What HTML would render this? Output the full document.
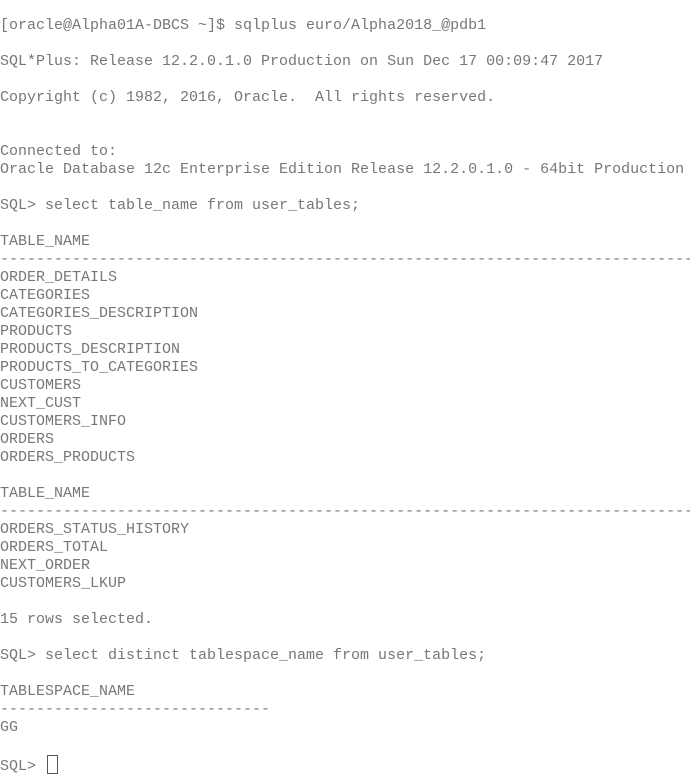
<!DOCTYPE html>
<html><head><style>
html,body{margin:0;padding:0;background:#fff;width:690px;height:770px;overflow:hidden}
pre{margin:0;position:absolute;left:0;top:17px;font-family:"Liberation Mono",monospace;font-size:15px;line-height:18px;color:#777;-webkit-text-stroke:0}
.c{display:inline-block;width:9px;height:17px;border:1px solid #555;vertical-align:-4px;margin-left:2px}
</style></head><body><pre>[oracle@Alpha01A-DBCS ~]$ sqlplus euro/Alpha2018_@pdb1

SQL*Plus: Release 12.2.0.1.0 Production on Sun Dec 17 00:09:47 2017

Copyright (c) 1982, 2016, Oracle.  All rights reserved.


Connected to:
Oracle Database 12c Enterprise Edition Release 12.2.0.1.0 - 64bit Production

SQL&gt; select table_name from user_tables;

TABLE_NAME
--------------------------------------------------------------------------------
ORDER_DETAILS
CATEGORIES
CATEGORIES_DESCRIPTION
PRODUCTS
PRODUCTS_DESCRIPTION
PRODUCTS_TO_CATEGORIES
CUSTOMERS
NEXT_CUST
CUSTOMERS_INFO
ORDERS
ORDERS_PRODUCTS

TABLE_NAME
--------------------------------------------------------------------------------
ORDERS_STATUS_HISTORY
ORDERS_TOTAL
NEXT_ORDER
CUSTOMERS_LKUP

15 rows selected.

SQL&gt; select distinct tablespace_name from user_tables;

TABLESPACE_NAME
------------------------------
GG

SQL&gt; <span class="c"></span></pre></body></html>
